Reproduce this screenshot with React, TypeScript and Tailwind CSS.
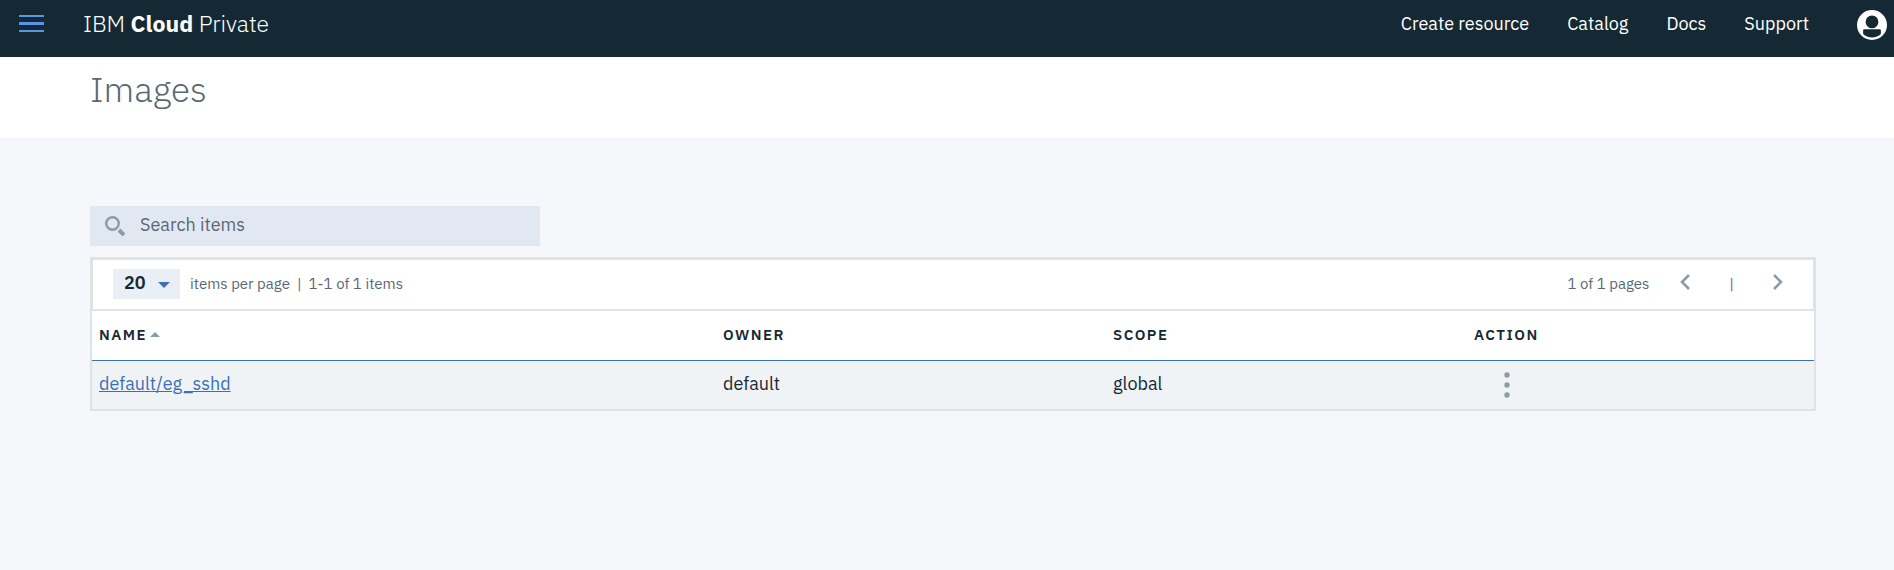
import React from "react";

const navLinks = ["Create resource", "Catalog", "Docs", "Support"];

const images = [{ name: "default/eg_sshd", owner: "default", scope: "global" }];

function UserIcon() {
  return (
    <svg viewBox="0 0 30 30" className="size-[30px]" aria-hidden="true">
      <path
        fill="#fff"
        fillRule="evenodd"
        d="M15 0a15 15 0 1 1 0 30a15 15 0 0 1 0-30zM15 5.500a6.400 6.400 0 1 0 0 12.800a6.400 6.400 0 0 0 0-12.800zM7.500 19.300c-.9 0-1.400.6-1.400 1.400v3c2.200 2.500 5.300 3.700 8.900 3.700s6.700-1.200 8.900-3.700v-3c0-.8-.5-1.400-1.400-1.400z"
      />
    </svg>
  );
}

function Header() {
  return (
    <header className="flex h-[57px] items-start bg-[#152934] pr-[7px] pl-[19px] text-white">
      <button type="button" aria-label="Menu" className="mt-[15px]">
        <svg viewBox="0 0 25 17" className="h-[17px] w-[25px]" fill="#5596e6" aria-hidden="true">
          <rect width="25" height="2" />
          <rect y="7" width="25" height="3" />
          <rect y="15" width="25" height="2" />
        </svg>
      </button>
      <a href="#" className="mt-[9px] ml-[39px] text-[23px] leading-7 font-light">
        IBM <span className="font-bold">Cloud</span> Private
      </a>
      <nav className="mt-3 ml-auto flex gap-[38px] text-lg leading-6">
        {navLinks.map((label) => (
          <a key={label} href="#">
            {label}
          </a>
        ))}
      </nav>
      <button type="button" aria-label="Account" className="mt-[10px] ml-12">
        <UserIcon />
      </button>
    </header>
  );
}

function Search() {
  return (
    <label className="flex h-10 w-[450px] items-center bg-[#e2e8f2] pb-0.5 pl-[15px]">
      <svg viewBox="0 0 20 20" className="mt-0.5 size-5 shrink-0" fill="none" stroke="#8d9ba5" aria-hidden="true">
        <circle cx="7.500" cy="7.500" r="6.300" strokeWidth="2.400" />
        <path d="M14 14l5 5" strokeWidth="4" />
      </svg>
      <input
        type="search"
        aria-label="Search items"
        placeholder="Search items"
        className="ml-[15px] min-w-0 flex-1 bg-transparent text-lg leading-6 text-[#5a6872] outline-none placeholder:text-[#5a6872]"
      />
    </label>
  );
}

function Chevron({ d }: { d: string }) {
  return (
    <svg viewBox="0 0 10 16" className="h-4 w-[10px]" fill="none" stroke="#8d9ba5" strokeWidth="2.600" aria-hidden="true">
      <path d={d} />
    </svg>
  );
}

function Pagination() {
  return (
    <div className="flex h-[52px] items-center border border-b-2 border-[#dfe3e6] pr-[30px] pb-0.5 pl-5 text-[15px] leading-5 text-[#5a6872]">
      <div className="grid">
        <select
          id="page-size"
          defaultValue="20"
          className="col-start-1 row-start-1 h-[30px] w-[67px] appearance-none bg-[#eaeff6] pb-0.5 pl-[11px] text-lg leading-6 font-semibold text-[#152934]"
        >
          <option>20</option>
          <option>50</option>
          <option>100</option>
        </select>
        <svg
          viewBox="0 0 12 6"
          className="pointer-events-none col-start-1 row-start-1 mt-0.5 mr-[10px] h-[6px] w-3 self-center justify-self-end"
          fill="#3d70b2"
          aria-hidden="true"
        >
          <path d="M0 0h12L6 6z" />
        </svg>
      </div>
      <label htmlFor="page-size" className="ml-[10px]">
        items per page
      </label>
      <span className="mx-[7px]">|</span>
      <span>1-1 of 1 items</span>
      <span className="ml-auto">1 of 1 pages</span>
      <button type="button" aria-label="Previous page" className="ml-[31px] pb-1">
        <Chevron d="M9 1L2 8l7 7" />
      </button>
      <span className="mx-[39px]">|</span>
      <button type="button" aria-label="Next page" className="pb-1">
        <Chevron d="M1 1l7 7-7 7" />
      </button>
    </div>
  );
}

function ImageTable() {
  return (
    <table className="w-full table-fixed border-separate border-spacing-0 text-left text-[#152934]">
      <thead>
        <tr className="h-[50px] text-[15px] leading-5 tracking-widest *:border-b *:border-[#3d70b2] *:pb-0.5 *:pl-[7px] *:font-semibold">
          <th className="w-[36.24%]">
            <button type="button" className="flex items-center gap-[3px] tracking-widest">
              NAME
              <svg viewBox="0 0 10 5" className="h-[5px] w-[10px]" fill="#8d9ba5" aria-hidden="true">
                <path d="M0 5h10L5 0z" />
              </svg>
            </button>
          </th>
          <th className="w-[22.65%]">OWNER</th>
          <th className="w-[20.96%]">SCOPE</th>
          <th>ACTION</th>
        </tr>
      </thead>
      <tbody>
        {images.map((image) => (
          <tr key={image.name} className="h-12 bg-[#eff3f6] text-lg leading-6">
            <td className="pb-0.5 pl-[7px]">
              <a href="#" className="text-[#3d70b2] underline">
                {image.name}
              </a>
            </td>
            <td className="pb-0.5 pl-[7px]">{image.owner}</td>
            <td className="pb-0.5 pl-[7px]">{image.scope}</td>
            <td className="pl-[37px]">
              <button type="button" aria-label="Actions" className="block">
                <svg viewBox="0 0 6 26" className="h-[26px] w-[6px]" fill="#8d9ba5" aria-hidden="true">
                  <circle cx="3" cy="3" r="2.700" />
                  <circle cx="3" cy="13" r="2.700" />
                  <circle cx="3" cy="23" r="2.700" />
                </svg>
              </button>
            </td>
          </tr>
        ))}
      </tbody>
    </table>
  );
}

export default function App() {
  return (
    <div className="flex min-h-screen flex-col bg-[#f5f7fb] font-['IBM_Plex_Sans',Roboto,sans-serif]">
      <Header />
      <div className="h-[81px] bg-white pt-[10px] pl-[90px]">
        <h1 className="text-[35px] leading-11 font-light text-[#5a6872]">Images</h1>
      </div>
      <main className="pt-[68px] pr-[78px] pl-[90px]">
        <Search />
        <section className="mt-[11px] border-2 border-[#dfe3e6] bg-white">
          <Pagination />
          <ImageTable />
        </section>
      </main>
    </div>
  );
}
